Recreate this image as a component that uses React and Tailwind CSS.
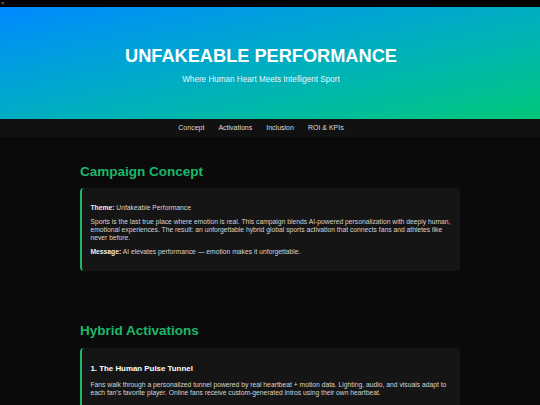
const NAV = ['Concept', 'Activations', 'Inclusion', 'ROI & KPIs']

function Section({ title, children, className = '' }) {
  return (
    <section className={className}>
      <h2 className="mb-[9px] text-[13.5px] font-bold leading-[1.15] text-[#1db86a]">{title}</h2>
      {children}
    </section>
  )
}

function Card({ children, className = '' }) {
  return (
    <div
      className={
        'flex flex-col gap-[6.75px] rounded-[4px] border-l-2 border-[#1db86a] bg-[#151515] px-[8.4px] text-[6.75px] leading-[1.15] text-[#d4d4d4] ' +
        className
      }
    >
      {children}
    </div>
  )
}

export default function App() {
  return (
    <div className="min-h-screen bg-[#0a0a0a] font-['Liberation_Sans',Arial,sans-serif] text-[#ddd]">
      <div className="h-[7px] bg-black pl-[1px] text-[6px] leading-[6px] text-[#ccc]">&lt;</div>

      <header className="h-[112px] bg-gradient-to-br from-[#0088ff] to-[#00c878] pt-[39px] pr-[18px] text-center text-white">
        <h1 className="text-[18.2px] font-bold leading-[1.15]">UNFAKEABLE PERFORMANCE</h1>
        <p className="mt-[8.3px] text-[8.15px] leading-[1.15] text-[#e8f4ff]">
          Where Human Heart Meets Intelligent Sport
        </p>
      </header>

      <nav className="flex h-[17.5px] items-center justify-center gap-[14px] bg-[#111] pr-[18px] text-[7px] leading-none text-[#ddd]">
        {NAV.map((item) => (
          <a key={item} href={'#' + item} className="text-[#ddd]">
            {item}
          </a>
        ))}
      </nav>

      <main className="mx-auto w-[380px] pt-[27.4px] pb-10">
        <Section title="Campaign Concept">
          <Card className="py-[15.1px]">
            <p>
              <strong className="text-[#eee]">Theme:</strong> Unfakeable Performance
            </p>
            <p>
              Sports is the last true place where emotion is real. This campaign blends AI-powered personalization with
              deeply human, emotional experiences. The result: an unforgettable hybrid global sports activation that
              connects fans and athletes like never before.
            </p>
            <p>
              <strong className="text-[#eee]">Message:</strong> AI elevates performance — emotion makes it
              unforgettable.
            </p>
          </Card>
        </Section>

        <Section title="Hybrid Activations" className="mt-[52.4px]">
          <Card className="gap-[8.2px] pt-[16px] pb-[15px]">
            <h3 className="text-[7.9px] font-bold leading-[1.15] text-white">1. The Human Pulse Tunnel</h3>
            <p>
              Fans walk through a personalized tunnel powered by real heartbeat + motion data. Lighting, audio, and
              visuals adapt to each fan’s favorite player. Online fans receive custom-generated intros using their own
              heartbeat.
            </p>
          </Card>
        </Section>
      </main>
    </div>
  )
}
